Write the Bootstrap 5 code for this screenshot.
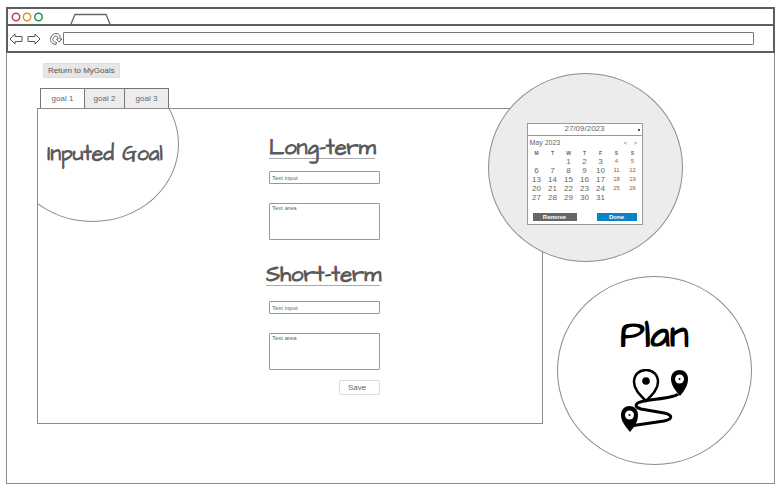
<!DOCTYPE html>
<html lang="en">
<head>
<meta charset="utf-8">
<meta name="viewport" content="width=device-width, initial-scale=1">
<title>MyGoals</title>
<link href="https://cdn.jsdelivr.net/npm/bootstrap@5.3.0/dist/css/bootstrap.min.css" rel="stylesheet">
<style>
body{font:8px/12px "Liberation Sans",Arial,sans-serif;color:#666;background:#fff;padding:7px 6px 5px}
button,input,textarea,select{font-family:inherit;color:inherit}
.frame{border:1px solid #8c8c8c;border-top:0}
.chrome{margin:0 -1px;border:2px solid #5e5e5e}
.tab-strip{height:17px;padding-left:3px;border-bottom:2px solid #5e5e5e}
.address{height:25px;padding:0 19px 0 1px}
.address input{height:13px;border:1px solid #777;border-radius:1px;padding:0 4px;font-size:8px;background:#fff}
.plain{border:0;background:none;padding:0;line-height:0}
.main-area{padding:10px 22px 18px 30px}
.return-btn{margin-left:6px;height:15px;padding:0 4px;border:1px solid #dedede;border-radius:1px;background:#e6e6e6;color:#555;font-size:8px;line-height:12px}
.goal-tabs{margin:10px 0 0 3px}
.goal-tabs button{height:20px;width:41px;border:1px solid #777;border-bottom:0;margin-right:-1px;padding:0;background:#ececec;font-size:8px;border-radius:0}
.goal-tabs .edge{width:45px}
.goal-tabs .on{background:#fff}
.panel{border:1px solid #8c8c8c;overflow:hidden;padding-bottom:28px}
.goal-oval{width:173px;height:156px;margin:-43px 0 0 -32px;border:1px solid #8c8c8c;border-radius:50%;padding:20px 0 0 25px}
.hand{font-family:"Architects Daughter","Comic Sans MS",Lato,sans-serif;color:#5a5a5a;margin:0;white-space:nowrap;font-weight:700}
.goal-oval .hand{font-size:21px;line-height:24px}
.goal-form{width:114px;margin:25px 0 0 87px}
.goal-form .hand{font-size:22px;line-height:20px;padding-top:4px;border-bottom:1px solid #aaa}
.goal-form .long{width:106px;margin-left:3px}
.goal-form input,.goal-form textarea{display:block;width:111px;margin-left:3px;border:1px solid #999;border-radius:1px;padding:0 2px;font-size:6px;line-height:8px;resize:none;overflow:hidden;background:#fff}
.goal-form input{height:13px;margin-top:12px}
.goal-form textarea{height:37px;margin-top:19px}
.goal-form .short{margin-top:21px}
.goal-form .short + input{margin-top:15px}
.save{display:block;width:41px;height:15px;margin:10px 0 0 73px;padding:0 5px 0 0;border:1px solid #ddd;border-radius:1px;background:#fff;font-size:8px;line-height:13px}
.side{width:264px;margin:10px 0 0 -55px;gap:14px;z-index:1}
.oval{width:195px;height:189px;border:1px solid #8c8c8c;border-radius:50%}
.calendar-oval{background:#ececec}
.calendar{width:116px;background:#fff;border:1px solid #999;margin:12px 2px 0 0}
.calendar select{display:block;width:100%;height:12px;border:0;border-bottom:1px solid #999;border-radius:0;appearance:none;text-align-last:center;font-size:8px;line-height:10px;padding:0;background:linear-gradient(#555,#555) 110px 5px/2px 2px no-repeat #fff}
.month{font-size:7px;line-height:8px;padding:3px 1px 0 2px}
.month button{width:10px;height:8px;font-size:6px;line-height:8px}
.days{width:112px;margin:3px 1px 0;table-layout:fixed;text-align:center;line-height:9px}
.days th,.days td{padding:0;height:9px}
.days th{font-size:5px;height:7px;line-height:7px}
.days td:nth-child(n+6){font-size:6px;color:#a8504c}
.cal-actions{padding:11px 5px 3px}
.cal-actions button{width:44px;height:8px;border:0;padding:0;color:#fff;background:#666;font-size:6px;line-height:8px;font-weight:bold}
.cal-actions .done{width:40px;background:#0784c6}
.plan-oval .hand{font-size:38px;line-height:44px;color:#000;margin-top:37px}
.route{margin:11px 0 0 -2px}
</style>
</head>
<body>
<div class="frame">
  <header class="chrome">
    <div class="tab-strip d-flex align-items-center">
      <svg width="34" height="12" viewBox="0 0 34 12" fill="none" stroke-width="1.5" aria-hidden="true"><circle cx="5" cy="6" r="3.7" stroke="#b8434b"/><circle cx="16" cy="6" r="3.7" stroke="#d8923c"/><circle cx="27.500" cy="6" r="3.7" stroke="#199a42"/></svg>
      <svg class="ms-4 align-self-end" width="46" height="11" viewBox="0 0 46 11" fill="none" stroke="#666" stroke-width="1.3" aria-hidden="true"><path d="M2 11 6 1.500H37L41 11"/></svg>
    </div>
    <div class="address d-flex align-items-center">
      <button class="plain" aria-label="Back"><svg width="14" height="12" viewBox="0 0 14 12" fill="none" stroke="#555"><path d="M1 6 6 1V3.500H13V8.500H6V11Z"/></svg></button>
      <button class="plain ms-1" aria-label="Forward"><svg width="14" height="12" viewBox="0 0 14 12" fill="none" stroke="#555"><path d="M13 6 8 1V3.500H1V8.500H8V11Z"/></svg></button>
      <button class="plain ms-2" aria-label="Reload"><svg width="14" height="14" viewBox="0 0 14 14" fill="none" stroke="#555" stroke-width=".9"><path d="M7 12.500C2 12 .5 8 2 5C4 .5 10 .5 11 4V7H13L10 10 7.500 7H9C9 3.500 6 3 4.500 5.500C3 8 4.500 10 7.500 10.500Z"/></svg></button>
      <input class="flex-grow-1" type="text" aria-label="Address">
    </div>
  </header>

  <main class="main-area d-flex align-items-start">
    <section class="flex-grow-1">
      <button class="return-btn">Return to MyGoals</button>
      <div class="goal-tabs d-flex" role="tablist">
        <button class="edge on" role="tab" aria-selected="true">goal 1</button>
        <button role="tab" aria-selected="false">goal 2</button>
        <button class="edge" role="tab" aria-selected="false">goal 3</button>
      </div>
      <div class="panel d-flex align-items-start">
        <div class="goal-oval flex-shrink-0 d-flex align-items-center justify-content-center"><h1 class="hand">Inputed Goal</h1></div>
        <form class="goal-form flex-shrink-0">
          <h2 class="hand long" id="long">Long-term</h2>
          <input type="text" value="Text input" aria-labelledby="long">
          <textarea aria-labelledby="long">Text area</textarea>
          <h2 class="hand short" id="short">Short-term</h2>
          <input type="text" value="Text input" aria-labelledby="short">
          <textarea aria-labelledby="short">Text area</textarea>
          <button class="save" type="button">Save</button>
        </form>
      </div>
    </section>

    <aside class="side d-flex flex-column flex-shrink-0">
      <section class="oval calendar-oval d-flex align-items-center justify-content-center">
        <div class="calendar">
          <select aria-label="Date"><option>27/09/2023</option></select>
          <div class="month d-flex"><span class="me-auto">May 2023</span><button class="plain" aria-label="Previous month">&lt;</button><button class="plain" aria-label="Next month">&gt;</button></div>
          <table class="days">
            <thead><tr><th>M</th><th>T</th><th>W</th><th>T</th><th>F</th><th>S</th><th>S</th></tr></thead>
            <tbody>
              <tr><td></td><td></td><td>1</td><td>2</td><td>3</td><td>4</td><td>5</td></tr>
              <tr><td>6</td><td>7</td><td>8</td><td>9</td><td>10</td><td>11</td><td>12</td></tr>
              <tr><td>13</td><td>14</td><td>15</td><td>16</td><td>17</td><td>18</td><td>19</td></tr>
              <tr><td>20</td><td>21</td><td>22</td><td>23</td><td>24</td><td>25</td><td>26</td></tr>
              <tr><td>27</td><td>28</td><td>29</td><td>30</td><td>31</td><td></td><td></td></tr>
            </tbody>
          </table>
          <div class="cal-actions d-flex justify-content-between"><button>Remove</button><button class="done">Done</button></div>
        </div>
      </section>
      <section class="oval plan-oval align-self-end d-flex flex-column align-items-center">
        <h2 class="hand">Plan</h2>
        <svg class="route" width="70" height="64" viewBox="0 0 70 64" aria-hidden="true">
          <path d="M59 25C56 29 35 30 25 32C15 34 15 38 22 40L45 44C54 46 54 50 45 52L11 57" fill="none" stroke="#000" stroke-width="3"/>
          <path d="M27 32C20 25 15 20 15 13C15 -3 39 -3 39 13C39 20 34 25 27 32Z" fill="#fff" stroke="#000" stroke-width="2.500"/>
          <circle cx="27" cy="12" r="3.800"/>
          <path id="pin" d="M61 27C56 21 52 16 52 10C52 -2 69 -2 69 10C69 16 66 21 61 27Z"/>
          <circle cx="60.500" cy="10" r="4.500" fill="#fff"/><circle cx="60.500" cy="10" r="1"/>
          <use href="#pin" x="-50" y="36"/>
          <circle cx="10.500" cy="46" r="4.500" fill="#fff"/><circle cx="10.500" cy="46" r="1"/>
        </svg>
      </section>
    </aside>
  </main>
</div>
<script src="https://cdn.jsdelivr.net/npm/bootstrap@5.3.0/dist/js/bootstrap.bundle.min.js"></script>
</body>
</html>
